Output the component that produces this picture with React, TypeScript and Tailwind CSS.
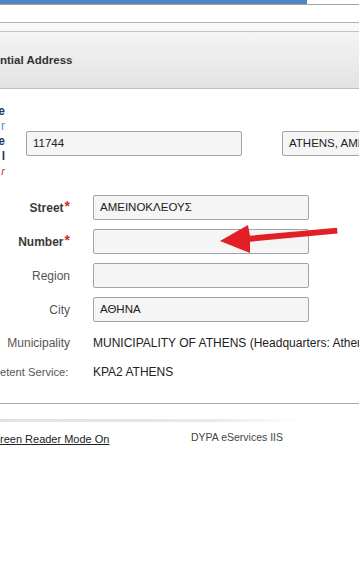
import React from "react";

const font = { fontFamily: '"Liberation Sans", Arial, sans-serif' };

function Field({ value, w }: { value?: string; w: string }) {
  return (
    <div
      className={`${w} h-[25px] shrink-0 rounded-[2px] border border-[#a3a3a3] bg-[#f5f5f5] pl-[6px] flex items-center text-[11.5px] text-[#222] whitespace-nowrap overflow-hidden`}
    >
      {value}
    </div>
  );
}

function Row({ label, bold, req, value }: { label: string; bold?: boolean; req?: boolean; value?: string }) {
  return (
    <div className="flex items-center h-[25px]">
      <div className={`w-[70px] shrink-0 flex justify-end items-start text-[12px] leading-[14px] ${bold ? "font-bold text-[#3a3a3a]" : "text-[#555]"}`}>
        <span>{label}</span>
        {req && <span className="text-[#d42a2a] font-bold text-[14px] leading-[10px] ml-[1px]">*</span>}
      </div>
      <div className="ml-[23px]">
        <Field value={value} w="w-[216px]" />
      </div>
    </div>
  );
}

export default function App() {
  return (
    <div className="relative w-[359px] h-[588px] overflow-hidden bg-white" style={font}>
      {/* top bars */}
      <div className="h-[4px] w-[307px] bg-[#5383c3]" />
      <div className="h-px bg-[#a3a3a3]" />
      <div className="h-[17px] bg-white" />
      <div className="h-px bg-[#b0b0b0]" />
      <div className="h-[8px] bg-[#f8f8f8]" />
      <div className="h-px bg-[#c2c2c2]" />
      {/* header */}
      <div className="h-[57px] border-b border-[#bdbdbd] bg-[linear-gradient(#f4f4f4,#e3e3e3)] flex items-center">
        <span className="text-[11.5px] font-bold text-[#333] whitespace-nowrap pt-[1px]">ntial Address</span>
      </div>
      {/* body */}
      <div className="border-b border-[#ababab] pb-[24px]">
        <div className="flex items-start pt-[15px]">
          <div className="w-[5px] shrink-0 flex flex-col text-[12px] leading-[15px] font-bold">
            <div className="flex justify-end whitespace-nowrap text-[#1f3a63]">e</div>
            <div className="flex justify-end whitespace-nowrap text-[#4a90d0] font-normal">r</div>
            <div className="flex justify-end whitespace-nowrap text-[#1f3a63]">e</div>
            <div className="flex justify-end whitespace-nowrap text-[#1f3a63]">l</div>
            <div className="flex justify-end whitespace-nowrap text-[#d32f2f] italic font-normal text-[11px]">r</div>
          </div>
          <div className="ml-[21px] mt-[27px]">
            <Field value="11744" w="w-[216px]" />
          </div>
          <div className="ml-[40px] mt-[27px]">
            <Field value="ATHENS, AMPELOKIPOI" w="w-[130px]" />
          </div>
        </div>
        <div className="mt-[16px] flex flex-col gap-[9px]">
          <Row label="Street" bold req value="ΑΜΕΙΝΟΚΛΕΟΥΣ" />
          <Row label="Number" bold req />
          <Row label="Region" />
          <Row label="City" value="ΑΘΗΝΑ" />
        </div>
        <div className="mt-[14px] flex items-center h-[14px] text-[12px]">
          <div className="w-[70px] shrink-0 flex justify-end text-[#555]">Municipality</div>
          <div className="ml-[23px] whitespace-nowrap text-[#222]">MUNICIPALITY OF ATHENS (Headquarters: Athens)</div>
        </div>
        <div className="mt-[15px] flex items-center h-[14px] text-[12px]">
          <div className="w-[69px] shrink-0 whitespace-nowrap text-[11.2px] text-[#555]">etent Service:</div>
          <div className="ml-[24px] whitespace-nowrap text-[#222]">KPA2 ATHENS</div>
        </div>
      </div>
      {/* footer */}
      <div className="mt-[15px] h-[3px] w-[300px] bg-[linear-gradient(to_right,#e2e2e2,#e8e8e8_70%,rgba(255,255,255,0))]" />
      <div className="mt-[9px] flex items-center h-[14px]">
        <div className="w-[191px] shrink-0">
          <span className="whitespace-nowrap text-[11px] text-[#222] underline">reen Reader Mode On</span>
        </div>
        <div className="text-[10.5px] text-[#444] whitespace-nowrap">DYPA eServices IIS</div>
      </div>
      {/* red annotation arrow */}
      <svg className="absolute left-0 top-0 pointer-events-none" width="359" height="588" viewBox="0 0 359 588">
        <polygon
          points="220,241 248,225 250,235.7 337,227.7 337.5,233.5 250,241.7 250,253"
          fill="#e11f24"
        />
      </svg>
    </div>
  );
}
